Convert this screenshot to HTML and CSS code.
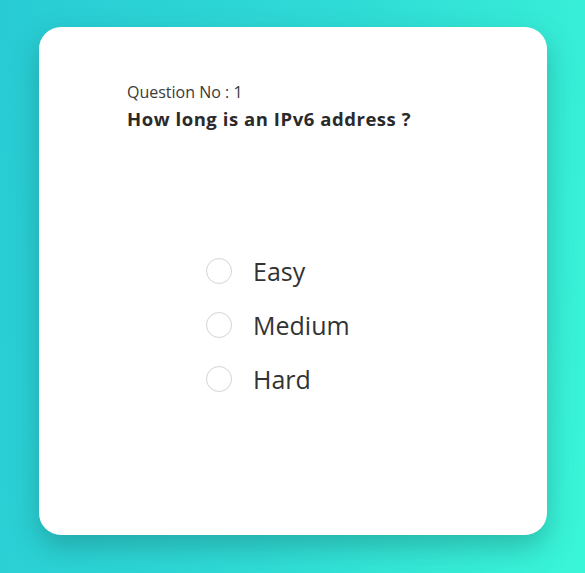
FILE: index.html
```html
<!DOCTYPE html>
<html>
<head>
<meta charset="utf-8">
<link rel="stylesheet" href="styles.css">
</head>
<body>
<div class="page">
  <div class="card">
    <div class="qno">Question No : 1</div>
    <div class="question">How long is an IPv6 address ?</div>
    <ul class="options">
      <li class="option"><span class="radio"></span><span class="label">Easy</span></li>
      <li class="option"><span class="radio"></span><span class="label">Medium</span></li>
      <li class="option"><span class="radio"></span><span class="label">Hard</span></li>
    </ul>
  </div>
</div>
</body>
</html>
```
FILE: styles.css
```css
html, body {
  margin: 0;
  padding: 0;
}
body {
  width: 585px;
  height: 573px;
  overflow: hidden;
  font-family: "Open Sans", "Noto Sans", sans-serif;
  color: #333;
}
.page {
  width: 585px;
  height: 573px;
  background: linear-gradient(100deg, #28cbd4 0%, #2fdbd6 50%, #3af6d8 100%);
  padding: 27px 0 0 39px;
  box-sizing: border-box;
}
.card {
  width: 508px;
  height: 508px;
  background: #fff;
  border-radius: 22px;
  box-shadow: 0 12px 28px rgba(20, 90, 90, 0.35);
  box-sizing: border-box;
  padding: 54px 0 0 88px;
}
.qno {
  font-size: 16px;
  line-height: 22px;
  color: #3a3a3a;
}
.question {
  font-size: 18.5px;
  letter-spacing: 0.55px;
  font-weight: 700;
  line-height: 26px;
  margin-top: 3px;
  color: #2a2a2a;
}
.options {
  list-style: none;
  margin: 122px 0 0 79px;
  padding: 0;
  display: flex;
  flex-direction: column;
  gap: 20px;
}
.option {
  display: flex;
  align-items: center;
  height: 34px;
}
.radio {
  width: 26px;
  height: 26px;
  border: 1.5px solid #d4d4d4;
  border-radius: 50%;
  box-sizing: border-box;
  margin-right: 21px;
}
.label {
  font-size: 25px;
  line-height: 34px;
  color: #333;
}
```
